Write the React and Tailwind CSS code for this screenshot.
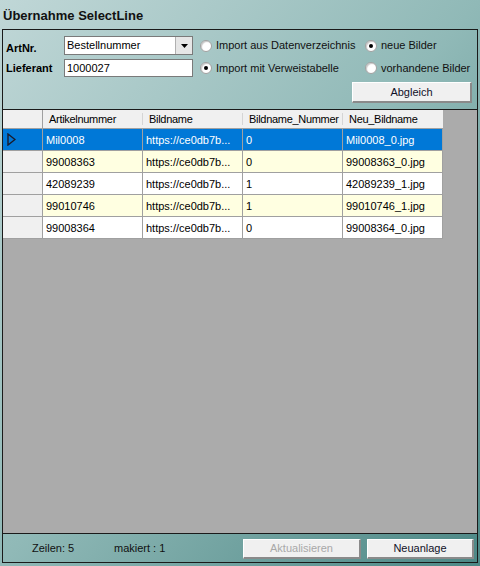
import React from 'react';

const rows = [
  { art: 'Mil0008', bild: 'https://ce0db7b...', nr: '0', neu: 'Mil0008_0.jpg' },
  { art: '99008363', bild: 'https://ce0db7b...', nr: '0', neu: '99008363_0.jpg' },
  { art: '42089239', bild: 'https://ce0db7b...', nr: '1', neu: '42089239_1.jpg' },
  { art: '99010746', bild: 'https://ce0db7b...', nr: '1', neu: '99010746_1.jpg' },
  { art: '99008364', bild: 'https://ce0db7b...', nr: '0', neu: '99008364_0.jpg' },
];

function Radio({ checked, label }) {
  return (
    <div className="flex items-center gap-[4px]">
      <div className="w-[12px] h-[12px] rounded-full border border-[#a0a0a0] bg-white flex items-center justify-center shadow-[inset_1px_1px_1px_#c8c8c8]">
        {checked && <div className="w-[4px] h-[4px] rounded-full bg-black" />}
      </div>
      <span className="text-[11px] text-[#111]">{label}</span>
    </div>
  );
}

function WinButton({ children, disabled, className }) {
  return (
    <div
      className={
        'flex items-center justify-center bg-[#f0f0f0] border-t border-l border-t-white border-l-white border-r-2 border-b-2 border-r-[#8a8a8a] border-b-[#8a8a8a] text-[11px] ' +
        (disabled ? 'text-[#a8a8a8] ' : 'text-[#101028] ') +
        className
      }
    >
      {children}
    </div>
  );
}

export default function App() {
  return (
    <div
      className="w-[480px] h-[566px] overflow-hidden bg-gradient-to-br from-[#c0d7d7] via-[#90b9b7] to-[#4c8886] text-black"
      style={{ fontFamily: '"Liberation Sans", Arial, sans-serif' }}
    >
      <div className="h-[29px] pl-[3px] pt-[8px] text-[13px] font-bold leading-[15px] text-[#111]">
        Übernahme SelectLine
      </div>

      <div className="mx-[2px] h-[534px] border border-[#1a1a1a] flex flex-col">
        {/* controls */}
        <div className="h-[79px] pt-[6px] flex flex-col">
          <div className="flex items-center h-[19px]">
            <div className="w-[61px] pl-[3px] pt-[6px] text-[11px] font-bold">ArtNr.</div>
            <div className="w-[129px] h-[19px] bg-white border border-[#7a7a7a] flex items-center justify-between">
              <span className="text-[11px] pl-[2px]">Bestellnummer</span>
              <div className="w-[17px] h-[17px] bg-[#e6e6e6] border-l border-[#b0b0b0] flex items-center justify-center">
                <svg width="7" height="4" viewBox="0 0 7 4"><path d="M0 0h7L3.5 4z" fill="#000" /></svg>
              </div>
            </div>
            <div className="w-[172px] pl-[7px]">
              <Radio label="Import aus Datenverzeichnis" />
            </div>
            <Radio checked label="neue Bilder" />
          </div>
          <div className="flex items-center h-[18px] mt-[4px]">
            <div className="w-[61px] pl-[3px] text-[11px] font-bold">Lieferant</div>
            <div className="w-[129px] h-[18px] bg-white border border-[#7a7a7a] flex items-center">
              <span className="text-[11px] pl-[2px]">1000027</span>
            </div>
            <div className="w-[172px] pl-[7px]">
              <Radio checked label="Import mit Verweistabelle" />
            </div>
            <Radio label="vorhandene Bilder" />
          </div>
          <div className="flex mt-[5px] pl-[349px]">
            <WinButton className="w-[120px] h-[21px]">Abgleich</WinButton>
          </div>
        </div>

        {/* grid */}
        <div className="flex-1 bg-[#ababab] border-t border-b border-[#1a1a1a] text-[11px]">
          <div className="w-[440px] flex flex-col">
            <div className="flex h-[19px] bg-[#f0f0f0] border-b border-[#a0a0a0]">
              <div className="w-[40px] border-r border-[#a0a0a0]" />
              {['Artikelnummer', 'Bildname', 'Bildname_Nummer', 'Neu_Bildname'].map((h, i) => (
                <div key={h} className="w-[100px] flex items-center pl-[6px] relative tracking-[-0.3px]">
                  {h}
                  {i < 3 && <div className="absolute right-0 top-[3px] bottom-[3px] w-px bg-[#d5d5d5]" />}
                </div>
              ))}
            </div>
            {rows.map((r, i) => {
              const sel = i === 0;
              const bg = sel ? 'bg-[#0078d7] text-white' : i % 2 === 1 ? 'bg-[#ffffe1]' : 'bg-white';
              return (
                <div key={i} className="flex h-[22px]">
                  <div
                    className={
                      'w-[40px] border-r border-b border-[#a0a0a0] flex items-center pl-[4px] ' +
                      (sel ? 'bg-[#0078d7]' : 'bg-[#f0f0f0]')
                    }
                  >
                    {sel && (
                      <svg width="9" height="13" viewBox="0 0 9 13">
                        <path d="M1 1L8 6.5L1 12Z" fill="none" stroke="#1a1a2a" strokeWidth="1.4" />
                      </svg>
                    )}
                  </div>
                  {[r.art, r.bild, r.nr, r.neu].map((c, j) => (
                    <div key={j} className={'w-[100px] border-r border-b border-[#a0a0a0] flex items-center pl-[3px] pt-[1px] ' + bg}>
                      {c}
                    </div>
                  ))}
                </div>
              );
            })}
          </div>
        </div>

        {/* footer */}
        <div className="h-[28px] flex items-center text-[11px] text-[#111]">
          <div className="w-[82px] pl-[29px]">Zeilen: 5</div>
          <div className="w-[158px] pl-[29px]">makiert : 1</div>
          <WinButton disabled className="w-[118px] h-[20px] mt-[2px]">Aktualisieren</WinButton>
          <WinButton className="w-[107px] h-[20px] mt-[2px] ml-[6px]">Neuanlage</WinButton>
        </div>
      </div>
    </div>
  );
}
